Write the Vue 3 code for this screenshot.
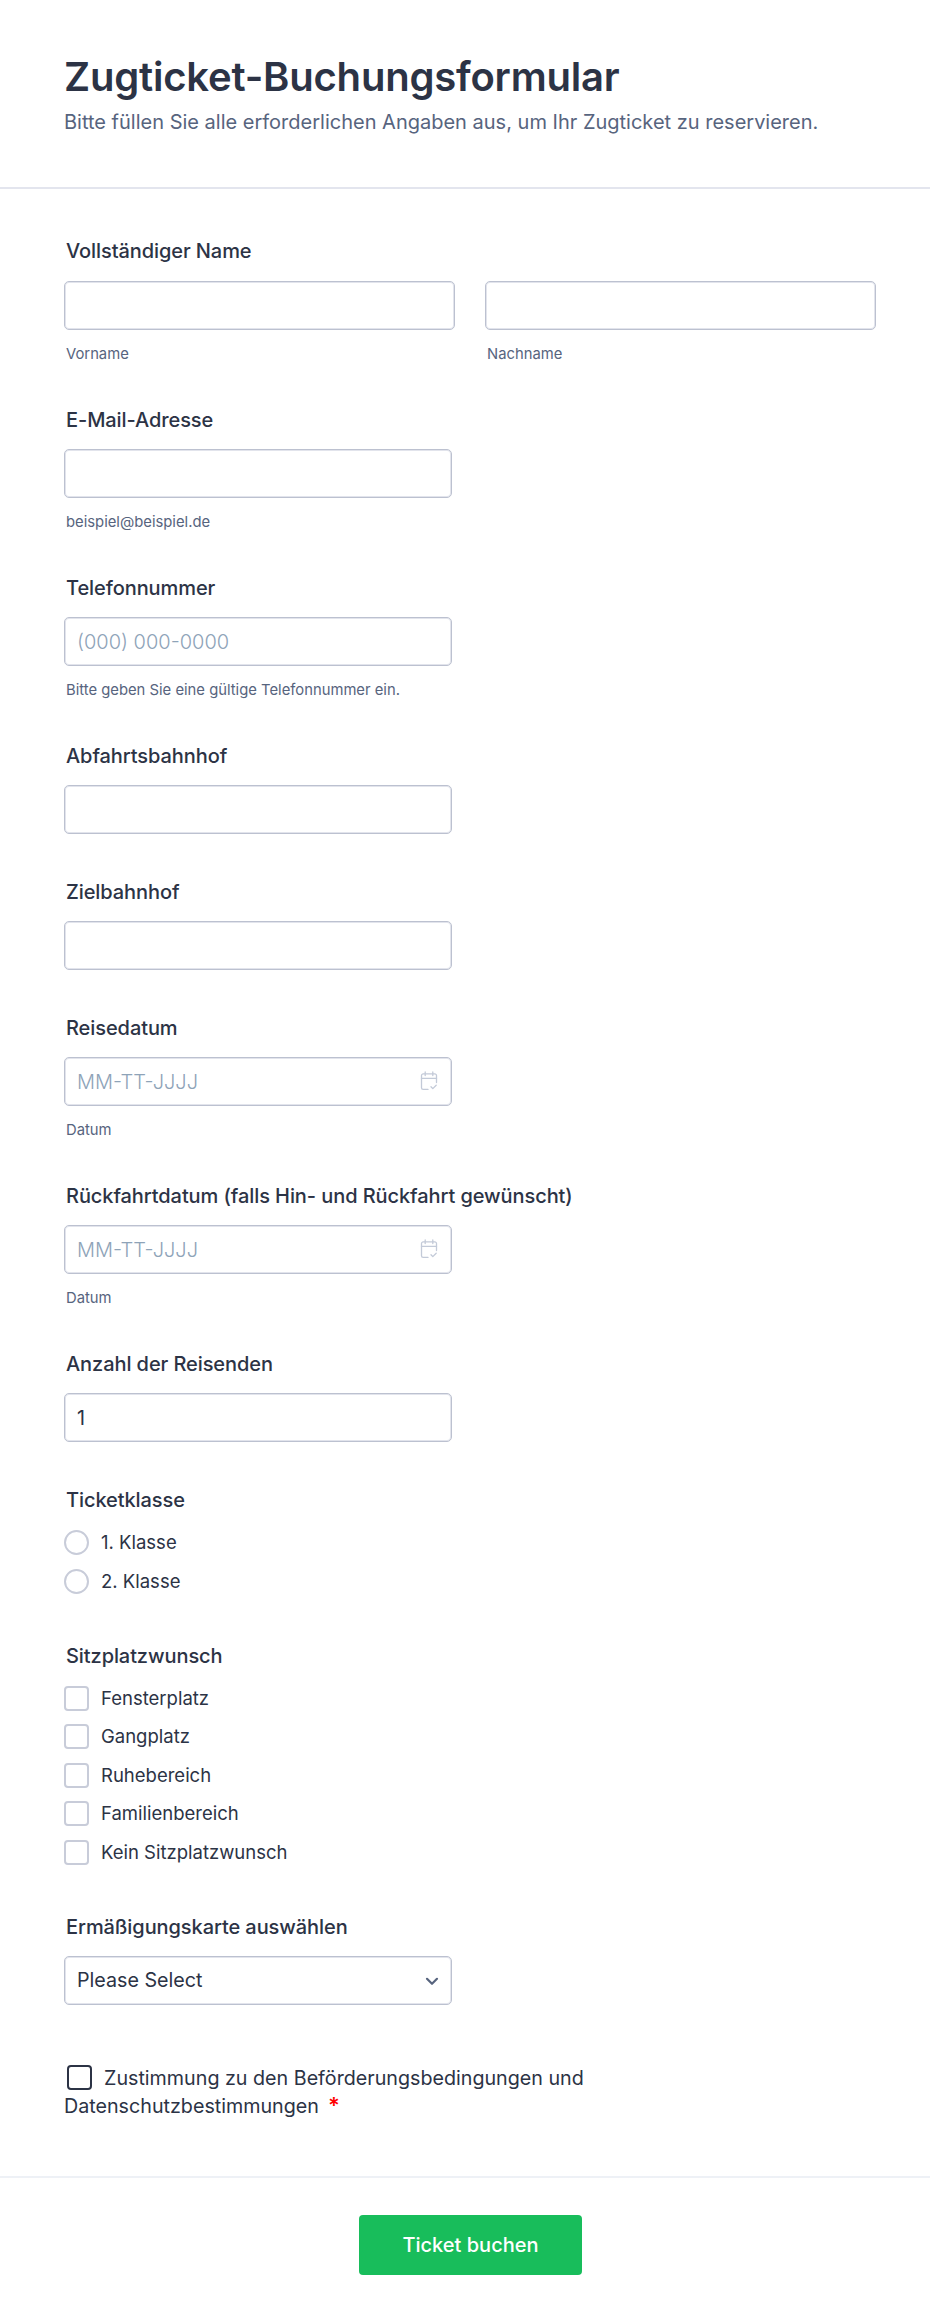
<script setup>
const singles = [
  { label: 'E-Mail-Adresse', sub: 'beispiel@beispiel.de', type: 'email' },
  { label: 'Telefonnummer', sub: 'Bitte geben Sie eine gültige Telefonnummer ein.', placeholder: '(000) 000-0000', type: 'tel' },
  { label: 'Abfahrtsbahnhof' },
  { label: 'Zielbahnhof' },
]
const dates = [
  { label: 'Reisedatum' },
  { label: 'Rückfahrtdatum (falls Hin- und Rückfahrt gewünscht)' },
]
const classes = ['1. Klasse', '2. Klasse']
const seats = ['Fensterplatz', 'Gangplatz', 'Ruhebereich', 'Familienbereich', 'Kein Sitzplatzwunsch']
</script>

<template>
  <div class="page">
    <header class="head">
      <h1>Zugticket-Buchungsformular</h1>
      <p>Bitte füllen Sie alle erforderlichen Angaben aus, um Ihr Zugticket zu reservieren.</p>
    </header>

    <form class="body" @submit.prevent>
      <div class="field name-field">
        <label class="lab">Vollständiger Name</label>
        <div class="name-row">
          <div class="name-col">
            <input class="inp wide" type="text" />
            <span class="sub">Vorname</span>
          </div>
          <div class="name-col">
            <input class="inp wide" type="text" />
            <span class="sub">Nachname</span>
          </div>
        </div>
      </div>

      <div v-for="f in singles" :key="f.label" class="field">
        <label class="lab">{{ f.label }}</label>
        <input class="inp" :type="f.type || 'text'" :placeholder="f.placeholder" />
        <span v-if="f.sub" class="sub">{{ f.sub }}</span>
      </div>

      <div v-for="d in dates" :key="d.label" class="field">
        <label class="lab">{{ d.label }}</label>
        <div class="date">
          <input class="inp" type="text" placeholder="MM-TT-JJJJ" />
          <svg class="cal" width="18" height="20" viewBox="0 0 18 20" fill="none" stroke="#c3cad8" stroke-width="1.3" stroke-linecap="round" stroke-linejoin="round">
            <path d="M8 18.4H3.2A1.7 1.7 0 0 1 1.5 16.7V4.6A1.7 1.7 0 0 1 3.2 2.9H14.8A1.7 1.7 0 0 1 16.5 4.6V11.5" />
            <path d="M1.5 7.4H16.5" />
            <path d="M5.2 1V4.6M12.8 1V4.6" />
            <path d="M11 15.8L12.8 17.6L16.2 14.2" />
          </svg>
        </div>
        <span class="sub">Datum</span>
      </div>

      <div class="field">
        <label class="lab">Anzahl der Reisenden</label>
        <input class="inp" type="text" value="1" />
      </div>

      <div class="field ticket">
        <label class="lab">Ticketklasse</label>
        <div class="opts">
          <label v-for="c in classes" :key="c" class="opt">
            <input class="radio" type="radio" name="klasse" />
            <span>{{ c }}</span>
          </label>
        </div>
      </div>

      <div class="field seat">
        <label class="lab">Sitzplatzwunsch</label>
        <div class="opts">
          <label v-for="s in seats" :key="s" class="opt">
            <input class="check" type="checkbox" />
            <span>{{ s }}</span>
          </label>
        </div>
      </div>

      <div class="field">
        <label class="lab">Ermäßigungskarte auswählen</label>
        <div class="select-wrap">
          <select class="inp sel">
            <option>Please Select</option>
          </select>
          <svg class="chev" width="14" height="9" viewBox="0 0 14 9" fill="none" stroke="#57647e" stroke-width="2.2" stroke-linecap="round" stroke-linejoin="round">
            <path d="M2 1.8L7 6.8L12 1.8" />
          </svg>
        </div>
      </div>

      <div class="consent">
        <div class="consent-line"><input class="check dark" type="checkbox" /><span>Zustimmung zu den Beförderungsbedingungen und</span></div>
        <div class="consent-line"><span>Datenschutzbestimmungen</span><span class="req">*</span></div>
      </div>
    </form>

    <footer class="foot">
      <button class="submit" type="button">Ticket buchen</button>
    </footer>
  </div>
</template>

<style>
html, body { margin: 0; background: #fff; }
</style>

<style scoped>
.page {
  width: 930px;
  height: 2324px;
  box-sizing: border-box;
  background: #fff;
  font-family: Inter, "Liberation Sans", sans-serif;
  color: #2c3345;
  overflow: hidden;
}
.head {
  height: 189px;
  box-sizing: border-box;
  padding: 52px 64px 0;
  border-bottom: 2px solid #e3e5ee;
}
h1 {
  margin: 0;
  font-size: 40px;
  line-height: 50px;
  font-weight: 600;
  letter-spacing: -0.2px;
  color: #2c3345;
}
.head p {
  margin: 8px 0 0;
  font-size: 20px;
  line-height: 24px;
  color: #57647e;
}
.body {
  display: flex;
  flex-direction: column;
  gap: 46px;
  padding: 50px 64px 0;
}
.field { display: flex; flex-direction: column; align-items: flex-start; }
.lab {
  display: block;
  margin: 0 0 17px 2px;
  font-size: 20px;
  line-height: 24px;
  font-weight: 500;
  letter-spacing: -0.08px;
  color: #2c3345;
}
.name-field .lab { margin-bottom: 18px; }
.inp {
  display: block;
  width: 388px;
  height: 49px;
  box-sizing: border-box;
  padding: 0 12px;
  border: 1px solid #bcc1d0;
  border-radius: 5px;
  box-shadow: inset 0 0 0 1px #e2e4ec;
  background: #fff;
  font: 400 19.7px Inter, "Liberation Sans", sans-serif;
  color: #2c3345;
  outline: none;
}
.inp::placeholder { color: #8ea3b8; opacity: 1; font-size: 20px; font-weight: 300; }
.wide { width: 391px; }
.sub {
  display: block;
  margin: 16px 0 0 2px;
  font-size: 14.8px;
  line-height: 16px;
  color: #57647e;
}
.name-row { display: flex; gap: 30px; }
.name-col { display: flex; flex-direction: column; }
.date, .select-wrap { position: relative; }
.cal { position: absolute; right: 14px; top: 14px; }
.chev { position: absolute; right: 13px; top: 21px; }
.sel { appearance: none; -webkit-appearance: none; }
.opts { display: flex; flex-direction: column; gap: 13.5px; margin-top: 1px; }
.ticket { margin-bottom: 4px; }
.seat { margin-bottom: 4px; }
.opt {
  display: flex;
  align-items: center;
  gap: 12px;
  height: 25px;
  font-size: 18.5px;
  line-height: 25px;
  color: #2c3345;
}
.radio, .check {
  appearance: none;
  -webkit-appearance: none;
  flex: none;
  margin: 0;
  width: 25px;
  height: 25px;
  box-sizing: border-box;
  border: 2px solid #c8ccd9;
  background: #fff;
}
.radio { border-radius: 50%; }
.check { border-radius: 4px; }
.consent {
  margin-top: 13px;
  font-size: 19.7px;
  line-height: 28px;
  color: #2c3345;
}
.check.dark {
  display: inline-block;
  vertical-align: -5px;
  margin: 0 12px 0 3px;
  border-color: #2c3345;
}
.req {
  display: inline-block;
  margin-left: 9px;
  color: #f00;
  font-size: 22px;
  line-height: 20px;
  font-weight: 600;
}
.foot {
  margin-top: 56px;
  padding: 37px 0 0 11px;
  border-top: 2px solid #eef1f6;
  display: flex;
  justify-content: center;
}
.submit {
  width: 223px;
  height: 60px;
  border: 0;
  border-radius: 4px;
  background: #18bd5b;
  color: #fff;
  font: 500 20px Inter, "Liberation Sans", sans-serif;
}
</style>
